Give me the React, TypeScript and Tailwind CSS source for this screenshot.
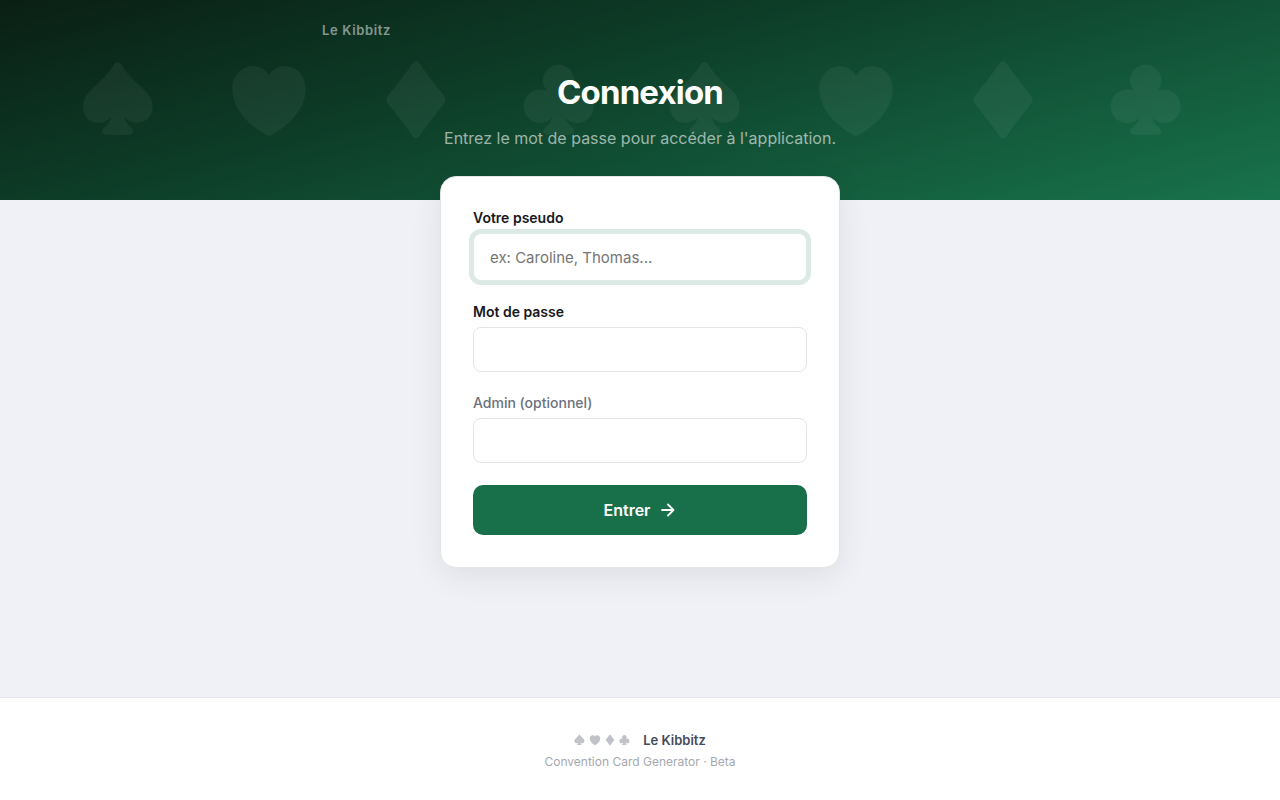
import React, { useState } from "react";

type Suit = "spade" | "heart" | "diamond" | "club";

const SUITS: Suit[] = ["spade", "heart", "diamond", "club"];

const SUIT_PATHS: Record<Suit, string> = {
  spade:
    "M113 13C118 13 122 15 125 20C139 44 156 62 180 84C204 105 218 121 218 147C218 174 198 194 173 194C157 194 143 188 132 176C137 192 144 200 153 208C164 219 158 230 148 230H78C68 230 62 219 73 208C82 200 89 192 94 176C83 188 69 194 53 194C28 194 9 174 9 147C9 121 22 105 46 84C70 62 87 44 101 20C104 15 108 13 113 13Z",
  heart:
    "M126 53C136 35 153 25 174 25C208 25 236 53 236 93C236 150 190 200 134 231Q126 236 118 231C62 200 16 150 16 93C16 53 44 25 78 25C99 25 116 35 126 53Z",
  diamond:
    "M117 14Q126 4 135 14C158 47 182 79 210 113Q219 125 210 137C182 171 158 203 135 236Q126 246 117 236C94 203 70 171 42 137Q33 125 42 113C70 79 94 47 117 14Z",
  club:
    "M113 20C139 20 160 41 160 67C160 79 156 89 149 97C155 95 162 95 169 95C197 95 218 117 218 145C218 173 197 195 169 195C154 195 141 189 132 178C136 193 146 203 155 211C163 219 158 230 149 230H77C68 230 63 219 71 211C80 203 90 193 94 178C85 189 72 195 57 195C29 195 8 173 8 145C8 117 29 95 57 95C64 95 71 95 77 97C70 89 66 79 66 67C66 41 87 20 113 20Z",
};

function SuitIcon({ suit, className }: { suit: Suit; className?: string }) {
  return (
    <svg viewBox="0 0 252 252" fill="currentColor" className={className} aria-hidden="true">
      <path d={SUIT_PATHS[suit]} />
    </svg>
  );
}

interface FieldProps {
  id: string;
  label: string;
  value: string;
  onChange: (value: string) => void;
  type?: string;
  placeholder?: string;
  muted?: boolean;
  highlighted?: boolean;
}

function Field({ id, label, value, onChange, type = "text", placeholder, muted, highlighted }: FieldProps) {
  return (
    <div className="flex flex-col gap-1.5">
      <label
        htmlFor={id}
        className={`text-sm leading-[18px] ${muted ? "font-medium text-[#6b7080]" : "font-semibold text-[#16181d]"}`}
      >
        {label}
      </label>
      <input
        id={id}
        type={type}
        value={value}
        placeholder={placeholder}
        onChange={(e) => onChange(e.target.value)}
        className={`w-full rounded-lg border bg-white px-4 text-[15px] text-[#16181d] outline-none placeholder:text-[#757575] ${
          highlighted ? "h-12 border-[#dce9e4] ring-4 ring-[#dce9e4]" : "h-[45px] border-[#e4e4e8]"
        }`}
      />
    </div>
  );
}

export default function App() {
  const [pseudo, setPseudo] = useState("");
  const [password, setPassword] = useState("");
  const [admin, setAdmin] = useState("");

  return (
    <div className="flex min-h-screen flex-col bg-[#f0f1f6] font-['Inter',sans-serif]">
      <header className="relative bg-[linear-gradient(165deg,#0a1f14_0%,#0d3d28_40%,#18734b_100%)] pb-12">
        {/* Suits row behind the title */}
        <div className="absolute inset-0 flex items-center justify-between pr-22 pl-20 text-white/5">
          {[...SUITS, ...SUITS].map((suit, i) => (
            <SuitIcon key={i} suit={suit} className="size-21" />
          ))}
        </div>

        <nav className="relative mx-auto flex max-w-[640px] px-0.5 pt-5">
          <a href="#" className="text-[13px] leading-5 font-semibold tracking-wider text-white/50">
            Le Kibbitz
          </a>
        </nav>

        <div className="relative mt-8 px-6 text-center">
          <h1 className="text-[33px] leading-10 font-bold tracking-tight text-white">Connexion</h1>
          <p className="mt-3 text-base leading-7 text-white/60">Entrez le mot de passe pour accéder à l'application.</p>
        </div>
      </header>

      <main className="relative -mt-6 flex-1 px-4">
        <form
          onSubmit={(e) => e.preventDefault()}
          className="mx-auto flex max-w-[400px] flex-col gap-[22px] rounded-2xl border border-[#e4e4e8] bg-white p-8 shadow-[0_8px_32px_rgba(0,0,0,0.08)]"
        >
          <Field
            id="pseudo"
            label="Votre pseudo"
            value={pseudo}
            onChange={setPseudo}
            placeholder="ex: Caroline, Thomas..."
            highlighted
          />
          <Field id="password" label="Mot de passe" type="password" value={password} onChange={setPassword} />
          <Field id="admin" label="Admin (optionnel)" type="password" value={admin} onChange={setAdmin} muted />

          <button
            type="submit"
            className="flex h-[50px] items-center justify-center gap-2 rounded-[10px] bg-[#18704a] text-base font-semibold text-white"
          >
            Entrer
            <svg
              viewBox="0 0 18 18"
              className="size-[18px]"
              fill="none"
              stroke="currentColor"
              strokeWidth="1.8"
              strokeLinecap="round"
              strokeLinejoin="round"
              aria-hidden="true"
            >
              <path d="M4 9h11.500M10 3.500L15.500 9l-5.500 5.500" />
            </svg>
          </button>
        </form>
      </main>

      <footer className="border-t border-[#e3e4e9] bg-white px-6 pt-8 pb-[30px] text-center">
        <div className="flex items-center justify-center gap-3">
          <div className="flex gap-[3px] text-[#c1c2c7]">
            {SUITS.map((suit) => (
              <SuitIcon key={suit} suit={suit} className="size-3" />
            ))}
          </div>
          <span className="text-[13px] leading-5 font-semibold text-[#454b5a]">Le Kibbitz</span>
        </div>
        <p className="mt-1 text-xs leading-4 text-[#a6a8af]">Convention Card Generator · Beta</p>
      </footer>
    </div>
  );
}
